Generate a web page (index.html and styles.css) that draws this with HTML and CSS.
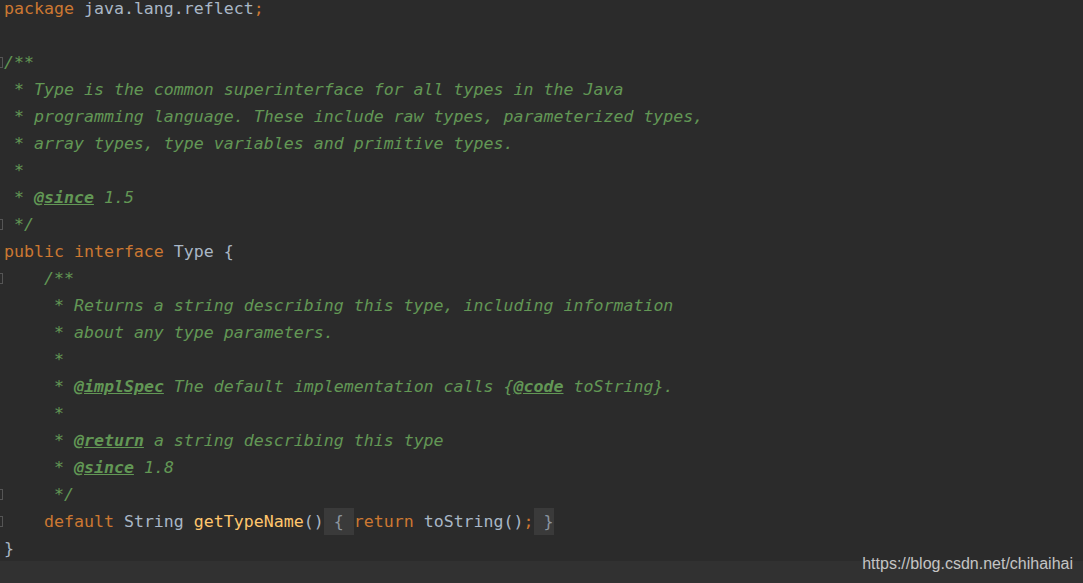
FILE: index.html
```html
<!DOCTYPE html>
<html lang="en">

<head>
    <meta charset="UTF-8">
    <meta name="viewport" content="width=device-width, initial-scale=1.0">
    <title>Type.java</title>
    <link rel="stylesheet" href="styles.css">
</head>

<body>
    <div class="editor">
        <div class="code">
            <div class="line"><span class="gutter"></span><span class="kw">package</span> java.lang.reflect<span class="kw">;</span></div>
            <div class="line"><span class="gutter"></span></div>
            <div class="line"><span class="gutter"><i class="fold"></i></span><span class="doc">/**</span></div>
            <div class="line"><span class="gutter"></span><span class="doc"> * Type is the common superinterface for all types in the Java</span></div>
            <div class="line"><span class="gutter"></span><span class="doc"> * programming language. These include raw types, parameterized types,</span></div>
            <div class="line"><span class="gutter"></span><span class="doc"> * array types, type variables and primitive types.</span></div>
            <div class="line"><span class="gutter"></span><span class="doc"> *</span></div>
            <div class="line"><span class="gutter"></span><span class="doc"> * <b class="tag">@since</b> 1.5</span></div>
            <div class="line"><span class="gutter"><i class="fold"></i></span><span class="doc"> */</span></div>
            <div class="line"><span class="gutter"></span><span class="kw">public interface</span> Type {</div>
            <div class="line"><span class="gutter"><i class="fold"></i></span>    <span class="doc">/**</span></div>
            <div class="line"><span class="gutter"></span>    <span class="doc"> * Returns a string describing this type, including information</span></div>
            <div class="line"><span class="gutter"></span>    <span class="doc"> * about any type parameters.</span></div>
            <div class="line"><span class="gutter"></span>    <span class="doc"> *</span></div>
            <div class="line"><span class="gutter"></span>    <span class="doc"> * <b class="tag">@implSpec</b> The default implementation calls {<b class="tag">@code</b> toString}.</span></div>
            <div class="line"><span class="gutter"></span>    <span class="doc"> *</span></div>
            <div class="line"><span class="gutter"></span>    <span class="doc"> * <b class="tag">@return</b> a string describing this type</span></div>
            <div class="line"><span class="gutter"></span>    <span class="doc"> * <b class="tag">@since</b> 1.8</span></div>
            <div class="line"><span class="gutter"><i class="fold"></i></span>    <span class="doc"> */</span></div>
            <div class="line"><span class="gutter"><i class="fold"></i></span>    <span class="kw">default</span> String <span class="fn">getTypeName</span>()<span class="folded"> { </span><span class="kw">return</span> toString()<span class="kw">;</span><span class="folded"> }</span></div>
            <div class="line"><span class="gutter"></span>}</div>
        </div>
        <div class="bottom-bar">
            <span class="watermark">https://blog.csdn.net/chihaihai</span>
        </div>
    </div>
</body>

</html>
```

FILE: styles.css
```css
html,
body {
    margin: 0;
    padding: 0;
    height: 100%;
    background-color: #2b2b2b;
    overflow: hidden;
}

.editor {
    display: flex;
    flex-direction: column;
    height: 583px;
}

.code {
    margin-top: -5px;
    font-family: "DejaVu Sans Mono", "Liberation Mono", monospace;
    font-size: 16.6px;
    color: #a9b7c6;
}

.line {
    height: 27px;
    line-height: 27px;
    white-space: pre;
}

.gutter {
    display: inline-block;
    width: 4px;
    height: 27px;
    vertical-align: top;
    position: relative;
    overflow: hidden;
}

.fold {
    position: absolute;
    left: -3px;
    top: 8px;
    width: 4px;
    height: 9px;
    border: 1px solid #555555;
}

.kw {
    color: #cc7832;
}

.fn {
    color: #ffc66d;
}

.doc {
    color: #629755;
    font-style: italic;
}

.tag {
    font-weight: bold;
    text-decoration: underline;
}

.folded {
    display: inline-block;
    height: 27px;
    vertical-align: top;
    background-color: #3a3a3a;
    color: #8c96a0;
}

.bottom-bar {
    flex: 1;
    margin-top: -1px;
    background-color: #313131;
    display: flex;
    justify-content: flex-end;
    align-items: flex-start;
    padding-right: 10px;
}

.watermark {
    margin-top: -6px;
    font-family: "Liberation Sans", Arial, sans-serif;
    font-size: 16px;
    line-height: 18px;
    color: #c4c4c4;
}
```
